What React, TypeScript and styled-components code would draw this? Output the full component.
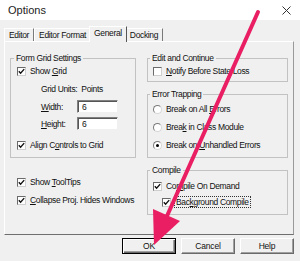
import React from "react";
import styled, { createGlobalStyle, css } from "styled-components";

const Global = createGlobalStyle`
  html, body { margin: 0; padding: 0; background: #f0f0f0; }
  body {
    font-family: "Liberation Sans", Arial, sans-serif;
    font-size: 8.5px;
    letter-spacing: -0.35px;
    color: #111;
  }
  * { box-sizing: border-box; }
`;

const Window = styled.div`
  position: relative;
  width: 300px;
  height: 261px;
  overflow: hidden;
  background: #f0f0f0;
  display: flex;
  flex-direction: column;
`;

const TitleBar = styled.div`
  height: 20px;
  flex: none;
  background: #fff;
  display: flex;
  align-items: center;
  justify-content: space-between;
  padding: 0 9px 0 8px;
`;

const Title = styled.span`
  font-size: 11px;
  letter-spacing: 0;
  color: #222;
`;

const Body = styled.div`
  display: flex;
  flex-direction: column;
  padding: 0 6px 0 4px;
`;

const TabStrip = styled.div`
  height: 21px;
  display: flex;
  align-items: flex-end;
  position: relative;
  z-index: 1;
`;

const Tab = styled.div<{ $active?: boolean }>`
  height: 13px;
  padding: 0 4px;
  display: flex;
  align-items: center;
  white-space: nowrap;
  line-height: 10px;
  border-top: 1px solid #fff;
  border-left: 1px solid #fff;
  border-right: 1px solid #7a7a7a;
  ${(p) =>
    p.$active &&
    css`
      height: 16px;
      margin: 0 -2px -1px;
      padding: 0 4px 3px;
      background: #f0f0f0;
      position: relative;
      z-index: 1;
      border-right-color: #555;
    `}
`;

const Panel = styled.div`
  height: 194px;
  display: flex;
  gap: 11px;
  padding: 11px 5px 0 5px;
  border-top: 1px solid #fff;
  border-left: 1px solid #fff;
  border-right: 1px solid #9a9a9a;
  border-bottom: 1px solid #6e6e6e;
`;

const Column = styled.div<{ $w: number }>`
  width: ${(p) => p.$w}px;
  flex: none;
  display: flex;
  flex-direction: column;
`;

const Group = styled.fieldset<{ $pt: number; $pb: number; $pl: number; $mt?: number }>`
  margin: ${(p) => p.$mt ?? 0}px 0 0 0;
  min-width: 0;
  border: 1px solid #c2c2c2;
  padding: ${(p) => p.$pt}px 4px ${(p) => p.$pb}px ${(p) => p.$pl}px;
`;

const Caption = styled.legend`
  padding: 0 2px;
  margin-left: -3px;
  height: 10px;
  line-height: 10px;
`;

const Stack = styled.div`
  display: flex;
  flex-direction: column;
`;

const Row = styled.div<{ $mt?: number; $indent?: number }>`
  display: flex;
  align-items: center;
  gap: 4px;
  height: 10px;
  line-height: 10px;
  white-space: nowrap;
  margin-top: ${(p) => p.$mt ?? 0}px;
  padding-left: ${(p) => p.$indent ?? 0}px;
`;

const FieldRow = styled.div<{ $mt: number }>`
  display: flex;
  align-items: center;
  height: 13px;
  margin-top: ${(p) => p.$mt}px;
  padding-left: 24px;
  white-space: nowrap;
`;

const FieldLabel = styled.span`
  width: 36px;
  flex: none;
`;

const TextBox = styled.input`
  width: 41px;
  height: 13px;
  margin: 0;
  padding: 0 0 0 4px;
  font: inherit;
  letter-spacing: 0;
  color: #111;
  background: #fff;
  border: 1px solid;
  border-color: #808080 #f0f0f0 #f0f0f0 #808080;
  box-shadow: inset 1px 1px 0 #555;
  outline: none;
`;

const Box = styled.span`
  width: 9px;
  height: 9px;
  flex: none;
  background: #fff;
  border: 1px solid;
  border-color: #6a6a6a #cfcfcf #cfcfcf #6a6a6a;
  display: inline-flex;
  align-items: center;
  justify-content: center;
`;

const Round = styled.span`
  width: 9px;
  height: 9px;
  flex: none;
  border-radius: 50%;
  background: #fff;
  border: 1px solid;
  border-color: #7a7a7a #d6d6d6 #d6d6d6 #7a7a7a;
  display: inline-flex;
  align-items: center;
  justify-content: center;
`;

const Dot = styled.span`
  width: 3px;
  height: 3px;
  border-radius: 50%;
  background: #000;
`;

const Focus = styled.span`
  outline: 1px dotted #333;
  outline-offset: 0;
  padding: 0 1px;
  line-height: 10px;
`;

const ButtonRow = styled.div`
  display: flex;
  justify-content: flex-end;
  gap: 5px;
  margin-top: 3px;
`;

const Button = styled.button<{ $default?: boolean }>`
  width: 54px;
  height: 16px;
  margin: 0;
  padding: 0;
  font: inherit;
  letter-spacing: -0.2px;
  color: #111;
  background: #f0f0f0;
  border: 1px solid;
  border-color: #fff #6a6a6a #6a6a6a #fff;
  box-shadow: inset -1px -1px 0 #a0a0a0;
  ${(p) =>
    p.$default &&
    css`
      border-color: #000;
      box-shadow: inset 1px 1px 0 #fff, inset -1px -1px 0 #6a6a6a, inset -2px -2px 0 #a0a0a0;
    `}
`;

const Overlay = styled.svg`
  position: absolute;
  left: 0;
  top: 0;
  pointer-events: none;
  z-index: 5;
`;

const Check = ({ on = true }: { on?: boolean }) => (
  <Box>
    {on && (
      <svg width="7" height="7" viewBox="0 0 7 7">
        <path d="M0.8 3.2 L2.6 5.2 L6.2 1.1" fill="none" stroke="#111" strokeWidth="1.4" />
      </svg>
    )}
  </Box>
);

const Radio = ({ on = false }: { on?: boolean }) => <Round>{on && <Dot />}</Round>;

export default function App() {
  return (
    <>
      <Global />
      <Window>
        <TitleBar>
          <Title>Options</Title>
          <svg width="9" height="9" viewBox="0 0 9 9">
            <path d="M0.5 0.5 L8.5 8.5 M8.5 0.5 L0.5 8.5" stroke="#333" strokeWidth="1" />
          </svg>
        </TitleBar>
        <Body>
          <TabStrip>
            <Tab>Editor</Tab>
            <Tab>Editor Format</Tab>
            <Tab $active>General</Tab>
            <Tab>Docking</Tab>
          </TabStrip>
          <Panel>
            <Column $w={126}>
              <Group $pt={3} $pb={7} $pl={6}>
                <Caption>Form Grid Settings</Caption>
                <Stack>
                  <Row>
                    <Check />
                    <span>
                      Show <u>G</u>rid
                    </span>
                  </Row>
                  <Row $mt={8} $indent={24}>
                    <span>Grid Units:&nbsp;&nbsp;Points</span>
                  </Row>
                  <FieldRow $mt={6}>
                    <FieldLabel>
                      <u>W</u>idth:
                    </FieldLabel>
                    <TextBox readOnly value="6" />
                  </FieldRow>
                  <FieldRow $mt={4}>
                    <FieldLabel>
                      <u>H</u>eight:
                    </FieldLabel>
                    <TextBox readOnly value="6" />
                  </FieldRow>
                  <Row $mt={10}>
                    <Check />
                    <span>
                      Align C<u>o</u>ntrols to Grid
                    </span>
                  </Row>
                </Stack>
              </Group>
              <Row $mt={19} $indent={7}>
                <Check />
                <span>
                  Show <u>T</u>oolTips
                </span>
              </Row>
              <Row $mt={8} $indent={7}>
                <Check />
                <span>
                  <u>C</u>ollapse Proj. Hides Windows
                </span>
              </Row>
            </Column>
            <Column $w={141}>
              <Group $pt={3} $pb={5} $pl={5}>
                <Caption>Edit and Continue</Caption>
                <Stack>
                  <Row>
                    <Check on={false} />
                    <span>
                      <u>N</u>otify Before State Loss
                    </span>
                  </Row>
                </Stack>
              </Group>
              <Group $pt={5} $pb={7} $pl={5} $mt={7}>
                <Caption>Error Trapping</Caption>
                <Stack>
                  <Row>
                    <Radio />
                    <span>
                      Break on All <u>E</u>rrors
                    </span>
                  </Row>
                  <Row $mt={8}>
                    <Radio />
                    <span>
                      Brea<u>k</u> in Class Module
                    </span>
                  </Row>
                  <Row $mt={8}>
                    <Radio on />
                    <span>
                      Break on <u>U</u>nhandled Errors
                    </span>
                  </Row>
                </Stack>
              </Group>
              <Group $pt={6} $pb={7} $pl={5} $mt={7}>
                <Caption>Compile</Caption>
                <Stack>
                  <Row>
                    <Check />
                    <span>
                      Co<u>m</u>pile On Demand
                    </span>
                  </Row>
                  <Row $mt={6} $indent={9}>
                    <Check />
                    <Focus>
                      Bac<u>k</u>ground Compile
                    </Focus>
                  </Row>
                </Stack>
              </Group>
            </Column>
          </Panel>
          <ButtonRow>
            <Button $default>OK</Button>
            <Button>Cancel</Button>
            <Button>Help</Button>
          </ButtonRow>
        </Body>
        <Overlay width="300" height="261" viewBox="0 0 300 261">
          <line x1="258" y1="12" x2="167" y2="216" stroke="#e91e63" strokeWidth="4" strokeLinecap="round" />
          <polygon points="154,245 180,221 153,209" fill="#e91e63" />
        </Overlay>
      </Window>
    </>
  );
}
